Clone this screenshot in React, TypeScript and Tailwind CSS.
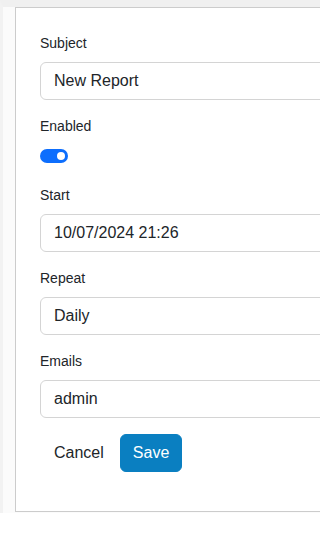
import React from "react";

function Label({ children }: { children: React.ReactNode }) {
  return <label className="block text-[14px] leading-[21px] text-[#212529] mb-2">{children}</label>;
}

function Field({ value }: { value: string }) {
  return (
    <input
      readOnly
      value={value}
      className="block w-full h-[38px] pl-[13px] pr-3 py-[6px] text-[16px] leading-6 text-[#212529] bg-white border border-[#d4d4d4] rounded-[6px] outline-none"
    />
  );
}

export default function App() {
  return (
    <div
      className="w-full min-h-[544px] overflow-hidden bg-white"
      style={{ fontFamily: '"Liberation Sans", Arial, sans-serif' }}
    >
      <div className="bg-[#fbfbfb] border-l-[3px] border-l-[#f2f2f2] border-t-[7px] border-t-[#f0f0f0] pl-[12px] pb-[1px]">
        <div className="w-[420px] bg-white border border-[#cccccc] pt-[25px] pl-[24px] pr-6 pb-[39px]">
          <Label>Subject</Label>
          <Field value="New Report" />
          <div className="mt-4">
            <Label>Enabled</Label>
            <div className="h-[21px] flex items-center">
              <div className="w-[28px] h-[14px] rounded-full bg-[#0d6efd] flex items-center justify-end pr-[3px]">
                <div className="w-[8px] h-[8px] rounded-full bg-white" />
              </div>
            </div>
          </div>
          <div className="mt-[19px]">
            <Label>Start</Label>
            <Field value="10/07/2024 21:26" />
          </div>
          <div className="mt-4">
            <Label>Repeat</Label>
            <Field value="Daily" />
          </div>
          <div className="mt-4">
            <Label>Emails</Label>
            <Field value="admin" />
          </div>
          <div className="mt-4 flex gap-[3px]">
            <button className="h-[38px] pl-[13px] pr-3 border border-transparent rounded-[6px] text-[16px] leading-6 text-[#212529] bg-transparent">
              Cancel
            </button>
            <button className="h-[38px] px-3 border border-[#0a7fc1] rounded-[6px] text-[16px] leading-6 text-white bg-[#0a7fc1]">
              Save
            </button>
          </div>
        </div>
      </div>
    </div>
  );
}
